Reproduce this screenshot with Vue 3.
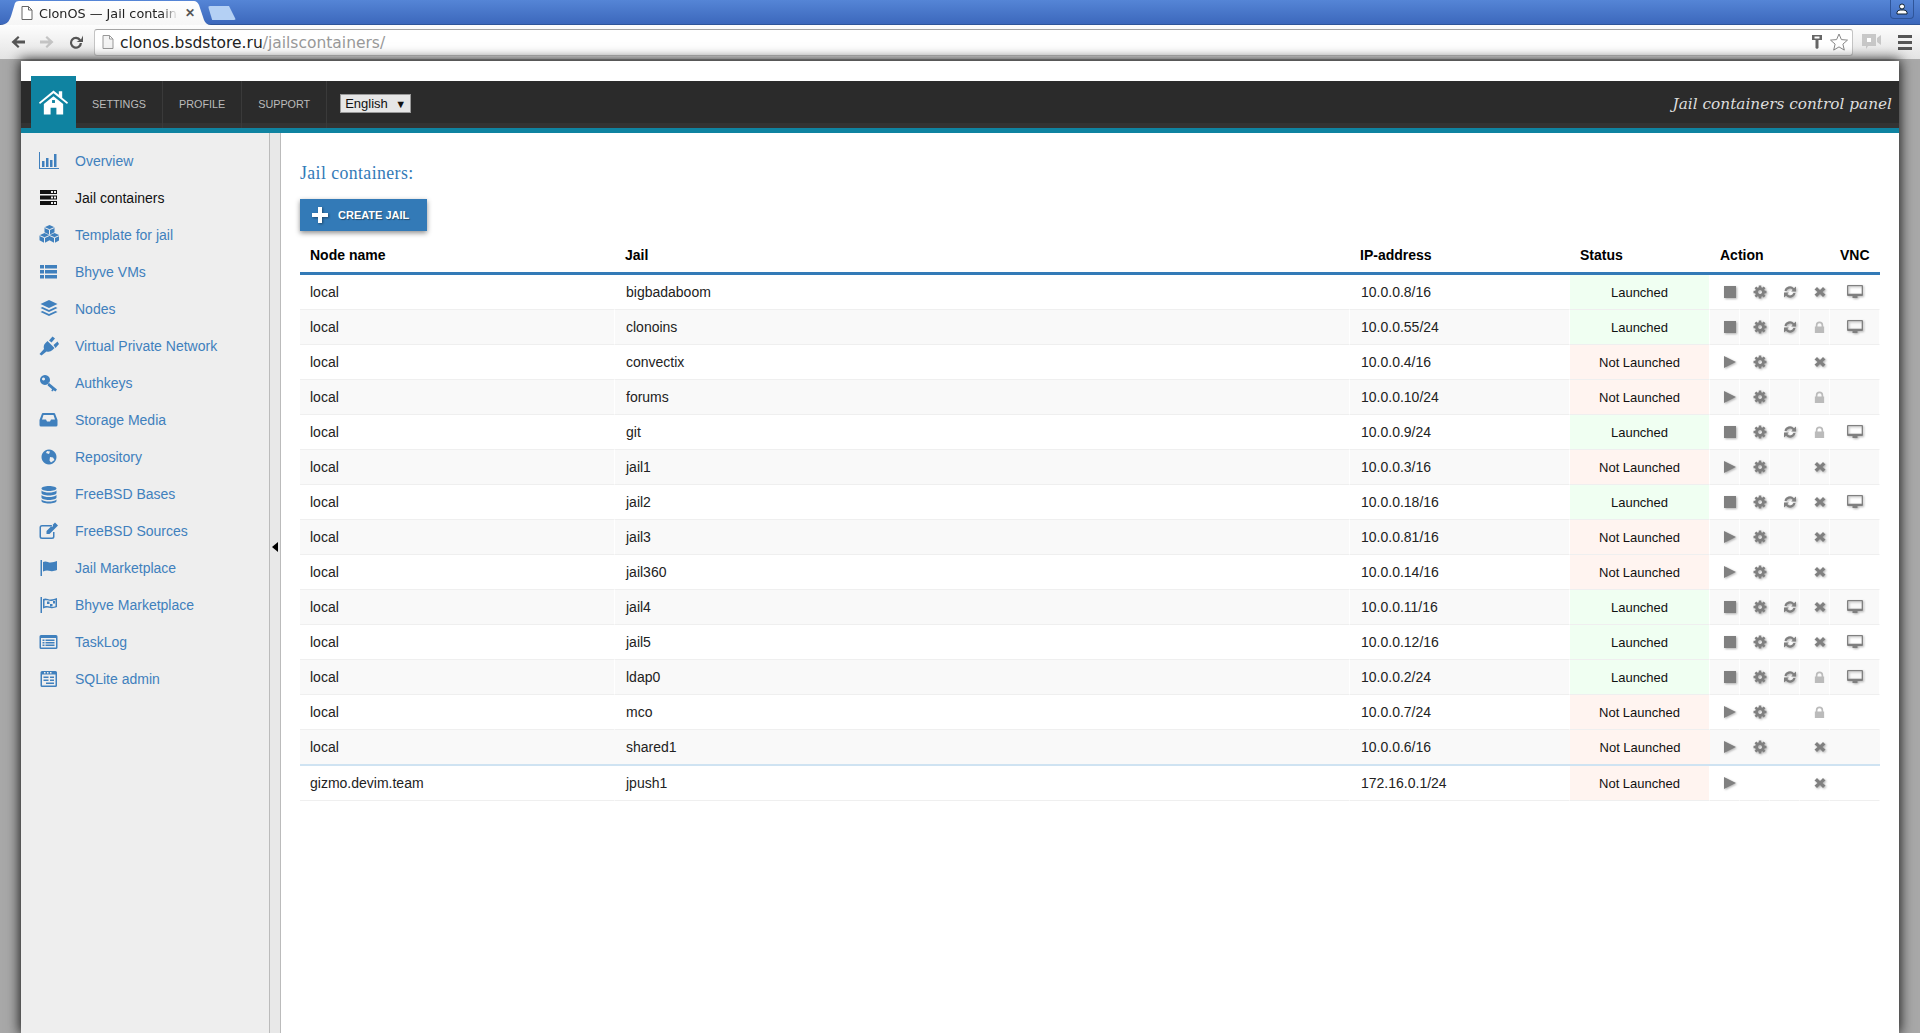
<template>
  <div class="screen">
    <div class="tabbar">
      <div class="tab">
        <svg class="doc" viewBox="0 0 12 14"><path d="M1 .5h6.500l3.500 3.500v9.500H1z M7.500 .5V4H11" fill="#fff" stroke="#666" /></svg>
        <span class="tab-title">ClonOS — Jail contain</span>
        <span class="tab-close">✕</span>
      </div>
      <div class="newtab"></div>
      <div class="profile">
        <svg viewBox="0 0 12 12" width="12" height="12"><circle cx="6" cy="3.500" r="2.500" fill="#fff" stroke="#123" /><path d="M1 11V9.500Q1 7.500 4 7h4q3 .5 3 2.500V11z" fill="#fff" stroke="#123" /></svg>
      </div>
    </div>

    <div class="toolbar">
      <svg class="nav-ico" viewBox="0 0 16 14"><path d="M15 5.500H6.500l3-3L8 1 1.500 7 8 13l1.500-1.500-3-3H15z" fill="#555" /></svg>
      <svg class="nav-ico" viewBox="0 0 16 14"><path d="M1 5.500h8.500l-3-3L8 1l6.500 6L8 13l-1.500-1.500 3-3H1z" fill="#c4c4c4" /></svg>
      <svg class="nav-ico" viewBox="0 0 16 16"><path d="M13 5.500A6 6 0 1 0 14 9h-2.300A3.800 3.800 0 1 1 11 6.500L8.500 8H15V1.500z" fill="#555" /></svg>
      <div class="omnibox">
        <svg class="doc" viewBox="0 0 12 14"><path d="M1 .5h6.500l3.500 3.500v9.500H1z M7.500 .5V4H11" fill="#f4f4f4" stroke="#999" /></svg>
        <span class="url">clonos.bsdstore.ru<span class="url-path">/jailscontainers/</span></span>
        <svg class="key" viewBox="0 0 10 14" width="10" height="14"><path d="M0 0h10v5H6.500v8l-1.500 1-1.500-1V5H0z M2.500 1.500v2h5v-2z" fill="#666" fill-rule="evenodd" /></svg>
        <svg class="star" viewBox="0 0 18 18" width="18" height="18"><path d="M9 1l2.400 5.600 6.100.5-4.600 4 1.400 6L9 13.900 3.700 17.100l1.400-6-4.600-4 6.100-.5z" fill="#fff" stroke="#888" /></svg>
      </div>
      <svg class="hangout" viewBox="0 0 20 18" width="20" height="18"><path d="M0 1h14v12H6l-2 3v-3H0z M15 5l4-3v10l-4-3z" fill="#c8c8c8" /><rect x="5" y="5" width="4" height="4" fill="#fff" /></svg>
      <div class="hamburger"><i></i><i></i><i></i></div>
    </div>

    <div class="page">
      <header class="topbar">
        <a class="home">
          <svg viewBox="0 0 30 26" width="29" height="26"><path d="M15 1 0 13.500l1 1.500L15 4l14 11 1-1.500-6-5V2h-3.500v3.500z M5 15l10-8 10 8v11h-7v-7h-6v7H5z" fill="#fff" /><path d="M13.500 11h3v3h-3z" fill="#0f83a1" /></svg>
        </a>
        <nav class="topnav">
          <a>Settings</a>
          <a>Profile</a>
          <a>Support</a>
        </nav>
        <div class="lang">English<span class="lang-arrow">▼</span></div>
        <div class="panel-title">Jail containers control panel</div>
      </header>

      <div class="body-wrap">
        <aside class="sidebar">
          <ul class="menu">
            <li v-for="item in menu" :key="item.label" :class="{ active: item.active }">
              <svg class="menu-ico" viewBox="0 0 20 20">
                <path :d="item.d" fill="currentColor" fill-rule="evenodd" />
                <path v-if="item.cut" :d="item.cut" fill="none" stroke="#eee" stroke-width="1" />
              </svg>
              <span>{{ item.label }}</span>
            </li>
          </ul>
          <div class="toggle"><span class="toggle-arrow"></span></div>
        </aside>

        <main class="content">
          <h1 class="title">Jail containers:</h1>
          <a class="create">
            <svg viewBox="0 0 16 16" width="16" height="16"><path d="M6 0h4v6h6v4h-6v6H6v-6H0V6h6z" fill="#fff" /></svg>
            Create jail
          </a>
          <table class="jails">
            <thead>
              <tr>
                <th class="c-node">Node name</th>
                <th class="c-jail">Jail</th>
                <th class="c-ip">IP-address</th>
                <th class="c-status">Status</th>
                <th class="c-action" colspan="4">Action</th>
                <th class="c-vnc">VNC</th>
              </tr>
            </thead>
            <tbody>
              <tr v-for="row in rows" :key="row.jail" :class="{ remote: row.node !== 'local', 'last-local': row.jail === 'shared1' }">
                <td>{{ row.node }}</td>
                <td class="name">{{ row.jail }}</td>
                <td class="ip">{{ row.ip }}</td>
                <td class="status" :class="row.on ? 'on' : 'off'">{{ row.on ? 'Launched' : 'Not Launched' }}</td>
                <td class="ico">
                  <svg v-if="row.on" viewBox="0 0 14 14"><rect x="1" y="1" width="12" height="12" /></svg>
                  <svg v-else viewBox="0 0 14 14"><path d="M1 1l12 6-12 6z" /></svg>
                </td>
                <td class="ico">
                  <svg v-if="row.node === 'local'" viewBox="0 0 14 14"><path :d="gear" fill-rule="evenodd" /></svg>
                </td>
                <td class="ico">
                  <svg v-if="row.on" viewBox="0 0 14 14"><path d="M1.500 6A5.500 5.500 0 0 1 11 3.200L13 1.500V6.500H8.200L9.700 5A3.500 3.500 0 0 0 3.600 6z M12.500 8A5.500 5.500 0 0 1 3 10.800L1 12.500V7.500h4.800L4.300 9a3.500 3.500 0 0 0 6.100-1z" /></svg>
                </td>
                <td class="ico">
                  <svg v-if="row.locked" class="lock" viewBox="0 0 14 14"><path d="M3 6V4.500a4 4 0 0 1 8 0V6h1v7H2V6z M4.800 6h4.400V4.500a2.200 2.200 0 0 0-4.400 0z" fill-rule="evenodd" /></svg>
                  <svg v-else viewBox="0 0 14 14"><path d="M4 2l3 3 3-3 2.500 2.500-3 2.500 3 2.500L10 12 7 9l-3 3-2.500-2.500 3-2.500-3-2.500z" /></svg>
                </td>
                <td class="ico vnc">
                  <svg v-if="row.on" viewBox="0 0 16 14"><path d="M1 0h14a1 1 0 0 1 1 1v9a1 1 0 0 1-1 1h-4.500v2h-5v-2H1a1 1 0 0 1-1-1V1a1 1 0 0 1 1-1z M1.300 1.300v7.500h13.400V1.300z" fill-rule="evenodd" /></svg>
                </td>
              </tr>
            </tbody>
          </table>
        </main>
      </div>
    </div>
  </div>
</template>

<script setup>
function makeGear() {
  const pts = [];
  const teeth = 8;
  for (let i = 0; i < teeth; i++) {
    const a = (i / teeth) * Math.PI * 2;
    const step = Math.PI / teeth;
    const list = [
      [a - step * 0.5, 6.6],
      [a + step * 0.5, 6.6],
      [a + step * 0.65, 4.9],
      [a + step * 1.35, 4.9],
    ];
    list.forEach(([t, r]) => {
      pts.push(`${(7 + Math.cos(t) * r).toFixed(2)} ${(7 + Math.sin(t) * r).toFixed(2)}`);
    });
  }
  return `M${pts.join("L")}z M7 5a2 2 0 1 0 .01 0z`;
}
const gear = makeGear();

const menu = [
  { label: "Overview", d: "M0 1h1v16h19v1H0z M3 10h2.500v6H3z M7 7h2.500v9H7z M11 9h2.500v7H11z M15 3h2.500v13H15z" },
  { label: "Jail containers", active: true, d: "M1 2h17v4H1z M12 3v2h2v-2z M15 3v2h2V3z M1 7.500h17v4H1z M12 8.500v2h2v-2z M15 8.500v2h2v-2z M1 13h17v4H1z M12 14v2h2v-2z M15 14v2h2v-2z" },
  { label: "Template for jail", d: "M10.500 0l5 2.200v5l-5 2.500-5-2.500v-5z M5.500 8l5 2.200v5l-5 2.800-5-2.800v-5z M15.500 8l5 2.200v5l-5 2.800-5-2.800v-5z", cut: "M5.500 2.500l5 2.200 5-2.200 M10.500 4.700v5 M.5 10.500l5 2.200 5-2.200 M5.500 12.700V18 M10.500 10.500l5 2.200 5-2.200 M15.500 12.700V18" },
  { label: "Bhyve VMs", d: "M1 3h4v3.500H1z M6 3h12v3.500H6z M1 8h4v3.500H1z M6 8h12v3.500H6z M1 13h4v3.500H1z M6 13h12v3.500H6z" },
  { label: "Nodes", d: "M10 1l8.500 4-8.500 4-8.500-4z M3.500 8l6.500 3 6.500-3 2 1-8.500 4-8.500-4z M3.500 12l6.500 3 6.500-3 2 1-8.500 4-8.500-4z" },
  { label: "Virtual Private Network", d: "M.5 18l4.500-5a6 6 0 0 1 1.500-6l2-2 7 7-2 2a6 6 0 0 1-6 1.500l-5 4z M10 4.500l3.500-4 2.500 2-3.500 4z M14.500 9l4-3.500 1.500 2.500-3.500 4z" },
  { label: "Authkeys", d: "M6 2a5 5 0 1 1-.01 0z M4.500 4.500a1.500 1.500 0 1 0 .01 0z M9.500 9.500l8.500 7-1.500 2-2-1.300-1.200 1.300-1-.8.800-1.500-4.500-3.800z" },
  { label: "Storage Media", d: "M4 3h11a1 1 0 0 1 1 .6l2.500 6.400v5a1.500 1.500 0 0 1-1.500 1.500H2A1.500 1.500 0 0 1 .5 15v-5L3 3.600A1 1 0 0 1 4 3z M4.500 5L3 9.500h4l1 2h3l1-2h4L14.500 5z" },
  { label: "Repository", d: "M10 2.500a7.500 7.500 0 1 1-.01 0z M7 6l3 1 1-2.500L8 4z M11 10l3 .5 1.500 2.500-3.500 2.500-1.500-2z" },
  { label: "FreeBSD Bases", d: "M10 2c4 0 7.500 1 7.500 2.500S14 7 10 7 2.500 6 2.500 4.500 6 2 10 2z M2.500 6.500C4 8 7 8.500 10 8.500s6-.5 7.500-2V9c0 1.500-3.500 2.500-7.500 2.500S2.500 10.500 2.500 9z M2.500 11C4 12.500 7 13 10 13s6-.5 7.500-2v2.500C17.500 15 14 16 10 16s-7.500-1-7.500-2.500z M2.500 15.500C4 17 7 17.500 10 17.500s6-.5 7.500-2V17c0 1.500-3.500 2.500-7.500 2.500S2.500 18.500 2.500 17z" },
  { label: "FreeBSD Sources", d: "M3 4h11v1.500H3a1 1 0 0 0-1 1v9a1 1 0 0 0 1 1h10a1 1 0 0 0 1-1V11h1.500v4.500A2.500 2.500 0 0 1 13 18H3a2.500 2.500 0 0 1-2.500-2.500v-9A2.500 2.500 0 0 1 3 4z M16 1.500l3 3-8.500 8.500H7.500v-3z" },
  { label: "Jail Marketplace", d: "M1.500 2H3v16H1.500z M4 4c3-1.500 5 .5 7.500.5S16 3.500 18 3v9c-2.500 1-4.500 1.500-6.500 1S7 12 4 13.500z" },
  { label: "Bhyve Marketplace", d: "M1.500 2H3v16H1.500z M4 4c3-1.500 5 .5 7.500.5S16 3.500 18 3v9c-2.500 1-4.500 1.500-6.500 1S7 12 4 13.500z M5.500 5.500v6c2-.8 4-.2 6 .3s3.500 0 5-.5V5c-2 .5-3.500 1-5 1S8 5 5.500 5.500z M8 6.500h2.500V9H8z M11 9h2.500v2.500H11z M14 6h2v2.500h-2z" },
  { label: "TaskLog", d: "M2 3h15a1.500 1.500 0 0 1 1.500 1.500v11A1.500 1.500 0 0 1 17 17H2A1.500 1.500 0 0 1 .5 15.500v-11A1.500 1.500 0 0 1 2 3z M2 6v9.500h15V6z M3.500 7.500h2V9h-2z M6.500 7.500h9V9h-9z M3.500 10h2v1.500h-2z M6.500 10h9v1.500h-9z M3.500 12.500h2V14h-2z M6.500 12.500h9V14h-9z" },
  { label: "SQLite admin", d: "M3 2h13.500A1.500 1.500 0 0 1 18 3.500v13a1.500 1.500 0 0 1-1.500 1.500H3a1.500 1.500 0 0 1-1.500-1.500v-13A1.500 1.500 0 0 1 3 2z M3 5.500v11h13.500v-11z M5 3h1.500v1.500H5z M8 3h1.500v1.500H8z M11 3h1.500v1.500H11z M4.500 7.500h5V9h-5z M11 7.500h4V9h-4z M4.500 10.500h5V12h-5z M11 10.500h4V12h-4z M7 13.500h8V15H7z" },
];

const rows = [
  { node: "local", jail: "bigbadaboom", ip: "10.0.0.8/16", on: true },
  { node: "local", jail: "clonoins", ip: "10.0.0.55/24", on: true, locked: true },
  { node: "local", jail: "convectix", ip: "10.0.0.4/16", on: false },
  { node: "local", jail: "forums", ip: "10.0.0.10/24", on: false, locked: true },
  { node: "local", jail: "git", ip: "10.0.0.9/24", on: true, locked: true },
  { node: "local", jail: "jail1", ip: "10.0.0.3/16", on: false },
  { node: "local", jail: "jail2", ip: "10.0.0.18/16", on: true },
  { node: "local", jail: "jail3", ip: "10.0.0.81/16", on: false },
  { node: "local", jail: "jail360", ip: "10.0.0.14/16", on: false },
  { node: "local", jail: "jail4", ip: "10.0.0.11/16", on: true },
  { node: "local", jail: "jail5", ip: "10.0.0.12/16", on: true },
  { node: "local", jail: "ldap0", ip: "10.0.0.2/24", on: true, locked: true },
  { node: "local", jail: "mco", ip: "10.0.0.7/24", on: false, locked: true },
  { node: "local", jail: "shared1", ip: "10.0.0.6/16", on: false },
  { node: "gizmo.devim.team", jail: "jpush1", ip: "172.16.0.1/24", on: false },
];
</script>

<style>
html, body {
  margin: 0;
  height: 1033px;
  overflow: hidden;
  background: #fff;
}
</style>

<style scoped>
.screen {
  display: flex;
  flex-direction: column;
  height: 1033px;
  overflow: hidden;
  background: #a8a8a8;
  font-family: "Liberation Sans", Arial, sans-serif;
}

/* browser chrome */
.tabbar {
  display: flex;
  align-items: flex-end;
  height: 25px;
  box-sizing: border-box;
  padding-right: 6px;
  background: linear-gradient(#5585d6, #3c68bc);
  border-bottom: 1px solid #2f5599;
}
.tab {
  display: flex;
  align-items: center;
  box-sizing: border-box;
  width: 211px;
  height: 25px;
  margin-bottom: -1px;
  padding: 1px 0 0 21px;
  background: linear-gradient(#fff, #f6f6f6);
  clip-path: path("M0 25 C8 25 10 20 12 13 L15 3 Q16 1 19 1 L194 1 Q197 1 199 5 L204 20 Q206 25 211 25 Z");
}
.doc {
  width: 12px;
  height: 14px;
  flex: none;
}
.tab-title {
  width: 139px;
  flex: none;
  margin-left: 6px;
  white-space: nowrap;
  font-family: "DejaVu Sans", sans-serif;
  font-size: 12.8px;
  color: #222;
  -webkit-mask-image: linear-gradient(90deg, #000 88%, transparent);
  mask-image: linear-gradient(90deg, #000 88%, transparent);
}
.tab-close {
  margin-left: 7px;
  font-size: 12px;
  font-weight: bold;
  color: #555;
}
.newtab {
  width: 28px;
  height: 14px;
  margin: 0 auto 4px -3px;
  background: #b4d0f4;
  clip-path: polygon(0 0, 75% 0, 100% 100%, 15% 100%);
  border-radius: 2px;
}
.profile {
  align-self: flex-start;
  display: flex;
  align-items: center;
  justify-content: center;
  box-sizing: border-box;
  width: 24px;
  height: 19px;
  border: 1px solid #2f5599;
  border-top: 0;
  border-radius: 0 0 4px 4px;
}
.toolbar {
  display: flex;
  align-items: center;
  box-sizing: border-box;
  height: 36px;
  padding: 0 8px 0 10px;
  background: linear-gradient(#fdfdfd, #e4e4e4);
  border-bottom: 2px solid #a9a9a9;
}
.nav-ico {
  width: 16px;
  height: 16px;
  margin-right: 13px;
  flex: none;
}
.omnibox {
  display: flex;
  align-items: center;
  flex: 1;
  box-sizing: border-box;
  height: 27px;
  margin-left: -3px;
  padding: 0 4px 0 7px;
  background: #fff;
  border: 1px solid #c4c4c4;
  border-top-color: #a4a4a4;
  border-radius: 3px;
}
.url {
  flex: 1;
  margin-left: 6px;
  padding-top: 1px;
  font-family: "DejaVu Sans", sans-serif;
  font-size: 15.5px;
  color: #222;
}
.url-path {
  color: #999;
}
.key {
  margin-right: 8px;
}
.hangout {
  margin: 0 16px 0 9px;
}
.hamburger {
  display: flex;
  flex-direction: column;
  gap: 3px;
  width: 14px;
}
.hamburger i {
  height: 3px;
  background: #555;
}

/* page */
.page {
  display: flex;
  flex-direction: column;
  flex: 1;
  min-height: 0;
  margin: 0 21px;
  padding-top: 20px;
  background: #fff;
  box-shadow: 0 0 12px 1px #111;
}
.topbar {
  display: flex;
  align-items: center;
  height: 47px;
  padding: 0 7px 0 10px;
  background: #2b2b2b;
  border-bottom: 5px solid #0f83a1;
  box-shadow: inset 0 -5px 0 #333;
}
.home {
  display: flex;
  align-items: center;
  justify-content: center;
  width: 45px;
  height: 52px;
  margin-top: -5px;
  background: #0f83a1;
}
.topnav {
  display: flex;
  align-self: stretch;
}
.topnav a {
  display: flex;
  align-items: center;
  padding: 0 16px 2px;
  border-right: 1px solid #3a3a3a;
  font-size: 10.8px;
  text-transform: uppercase;
  color: #bbb;
}
.lang {
  display: flex;
  align-items: center;
  justify-content: space-between;
  box-sizing: border-box;
  width: 71px;
  height: 19px;
  margin: 0 0 2px 13px;
  padding: 0 4px;
  background: #e6e6e6;
  border: 1px solid #999;
  font-size: 13px;
  color: #111;
}
.lang-arrow {
  font-size: 11px;
}
.panel-title {
  margin: 0 0 2px auto;
  font-family: "DejaVu Serif", serif;
  font-style: italic;
  font-size: 15.3px;
  color: #ddd;
}
.body-wrap {
  display: flex;
  flex: 1;
  min-height: 0;
}
.sidebar {
  position: relative;
  display: flex;
  flex: none;
  width: 260px;
  box-sizing: border-box;
  background: #eee;
  border-right: 1px solid #bbb;
}
.menu {
  flex: 1;
  margin: 0;
  padding: 9px 0 0 18px;
  list-style: none;
  border-right: 1px solid #bbb;
}
.menu li {
  display: flex;
  align-items: center;
  height: 37px;
  font-size: 14px;
  color: #4080bd;
}
.menu li.active {
  color: #111;
}
.menu-ico {
  flex: none;
  width: 20px;
  height: 20px;
  margin-right: 16px;
}
.toggle {
  position: relative;
  flex: none;
  width: 10px;
  background: #e8e8e8;
}
.toggle-arrow {
  position: absolute;
  top: 409px;
  left: 2px;
  border: 5px solid transparent;
  border-left: 0;
  border-right: 6px solid #000;
}
.content {
  flex: 1;
  min-width: 0;
  padding: 0 19px;
}
.title {
  margin: 30px 0 16px;
  font-family: "Liberation Serif", serif;
  font-size: 17.8px;
  font-weight: normal;
  line-height: 20px;
  letter-spacing: 0.4px;
  color: #337ab7;
}
.create {
  display: flex;
  align-items: center;
  gap: 10px;
  box-sizing: border-box;
  width: 127px;
  height: 32px;
  padding-left: 12px;
  background: #337ab7;
  box-shadow: 0 2px 5px rgba(0, 0, 0, 0.45);
  font-size: 11px;
  font-weight: bold;
  text-transform: uppercase;
  color: #fff;
  text-shadow: 1px 1px 1px rgba(0, 0, 0, 0.4);
}
.create svg {
  filter: drop-shadow(1px 1px 1px rgba(0, 0, 0, 0.4));
}
.jails {
  width: 1580px;
  table-layout: fixed;
  border-spacing: 0;
  font-size: 14px;
  color: #222;
}
.jails th {
  height: 44px;
  padding: 6px 0 0 10px;
  box-sizing: border-box;
  border-bottom: 3px solid #337ab7;
  font-size: 14px;
  text-align: left;
  color: #000;
}
.c-node { width: 315px; }
.c-jail { width: 735px; }
.c-ip { width: 220px; }
.c-status { width: 140px; }
.c-action { width: 120px; }
.c-vnc { width: 50px; }
.jails td {
  box-sizing: border-box;
  height: 35px;
  padding: 0 10px;
  border-bottom: 1px solid #efefef;
  border-right: 1px solid #fff;
}
.jails .name,
.jails .ip {
  padding-left: 11px;
}
.jails tbody tr:nth-child(even) td {
  background: #f9f9f9;
}
.jails tbody .last-local td {
  height: 36px;
  border-bottom: 2px solid #cfe3f2;
  border-right: 0;
}
.jails .status {
  padding: 0;
  font-size: 13px;
  text-align: center;
  color: #111;
}
.jails tbody tr td.on {
  background: #f0fff2;
}
.jails tbody tr td.off {
  background: #fff4f0;
}
.jails .ico {
  padding: 0 0 0 10px;
  line-height: 0;
  text-align: center;
}
.jails .ico.vnc {
  padding: 0;
}
.ico svg {
  width: 14px;
  height: 14px;
  fill: #808080;
  filter: drop-shadow(1px 1px 1px rgba(0, 0, 0, 0.3));
}
.ico svg.lock {
  width: 13px;
  height: 13px;
  fill: #bbb;
  filter: none;
}
.vnc svg {
  width: 16px;
}
</style>
